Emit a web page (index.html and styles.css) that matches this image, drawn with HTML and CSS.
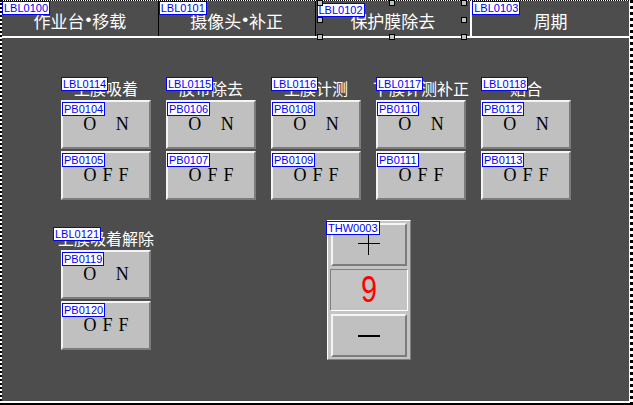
FILE: index.html
```html
<!doctype html>
<html>
<head>
    <meta charset="utf-8">
    <title>保护膜除去</title>
    <link rel="stylesheet" href="styles.css">
</head>
<body>
    <div class="screen">
        <div class="canvas">
            <div class="tabs">
                <div class="tab sep"><span class="tag">LBL0100</span>作业台<span class="dot">•</span>移载</div>
                <div class="tab sep"><span class="tag">LBL0101</span>摄像头<span class="dot">•</span>补正</div>
                <div class="tab current">
                    <span class="tag tag-sel">LBL0102</span>保护膜除去
                    <i class="handle h-tl"></i><i class="handle h-tc"></i><i class="handle h-tr"></i>
                    <i class="handle h-ml"></i><i class="handle h-mr"></i>
                    <i class="handle h-bl"></i><i class="handle h-bc"></i><i class="handle h-br"></i>
                </div>
                <div class="tab"><span class="tag">LBL0103</span>周期</div>
            </div>

            <div class="panel">
                <div class="row">
                    <div class="group">
                        <div class="caption"><span class="tag">LBL0114</span>上膜吸着</div>
                        <div class="btn on"><span class="tag">PB0104</span>O N</div>
                        <div class="btn off"><span class="tag">PB0105</span>OFF</div>
                    </div>
                    <div class="group">
                        <div class="caption"><span class="tag">LBL0115</span>胶带除去</div>
                        <div class="btn on"><span class="tag">PB0106</span>O N</div>
                        <div class="btn off"><span class="tag">PB0107</span>OFF</div>
                    </div>
                    <div class="group">
                        <div class="caption"><span class="tag">LBL0116</span>上膜计测</div>
                        <div class="btn on"><span class="tag">PB0108</span>O N</div>
                        <div class="btn off"><span class="tag">PB0109</span>OFF</div>
                    </div>
                    <div class="group">
                        <div class="caption"><span class="tag">LBL0117</span>下膜计测补正</div>
                        <div class="btn on"><span class="tag">PB0110</span>O N</div>
                        <div class="btn off"><span class="tag">PB0111</span>OFF</div>
                    </div>
                    <div class="group">
                        <div class="caption"><span class="tag">LBL0118</span>贴合</div>
                        <div class="btn on"><span class="tag">PB0112</span>O N</div>
                        <div class="btn off"><span class="tag">PB0113</span>OFF</div>
                    </div>
                </div>

                <div class="row row-low">
                    <div class="group group-low">
                        <div class="caption"><span class="tag tag-wide">LBL0121</span>上膜吸着解除</div>
                        <div class="btn on"><span class="tag">PB0119</span>O N</div>
                        <div class="btn off"><span class="tag">PB0120</span>OFF</div>
                    </div>
                    <div class="thw">
                        <span class="tag tag-thw">THW0003</span>
                        <div class="btn step">
                            <svg width="22" height="22" viewBox="0 0 22 22"><path d="M0 10.5H22M10.5 0V22" stroke="#000" stroke-width="1" fill="none"/></svg>
                        </div>
                        <div class="display"><span class="digit">9</span></div>
                        <div class="btn step">
                            <svg width="22" height="4" viewBox="0 0 22 4"><path d="M0 2H22" stroke="#000" stroke-width="2" fill="none"/></svg>
                        </div>
                    </div>
                </div>
            </div>
        </div>
    </div>
</body>
</html>
```

FILE: styles.css
```css
html, body {
    margin: 0;
    background: #fff;
    font-family: "Noto Sans CJK SC", "Noto Sans", sans-serif;
}

.screen {
    width: 633px;
    height: 405px;
    box-sizing: border-box;
    background: #fff;
    border-top: 1px dotted #000;
    border-left: 2px dotted #000;
    border-right: 3px dotted #000;
    border-bottom: 2px solid #000;
    padding: 0 1px 2px 0;
}

.canvas {
    height: 100%;
    background: #4d4d4d;
}

/* tag boxes over every part */
.tag {
    position: absolute;
    left: 0;
    top: 0;
    z-index: 2;
    background: #fff;
    border: 1px solid #0000ff;
    color: #0000ff;
    font-family: "Liberation Sans", sans-serif;
    font-size: 11px;
    line-height: 12px;
    letter-spacing: 0;
    word-spacing: 0;
    padding: 0 1px;
    white-space: nowrap;
}

/* tabs */
.tabs {
    display: flex;
    border-bottom: 2px solid #fff;
}

.tab {
    position: relative;
    width: 157px;
    height: 35px;
    box-sizing: border-box;
    padding-top: 3px;
    display: flex;
    align-items: center;
    justify-content: center;
    color: #fff;
    font-size: 17px;
}

.dot {
    font-family: "Liberation Sans", sans-serif;
    padding: 0 1px;
}

.tab.sep {
    border-right: 1px solid #000;
}

.tab.current {
    border-right: 2px solid #fff;
}

.tag-sel {
    left: 1px;
    top: 2px;
}

.handle {
    position: absolute;
    z-index: 3;
    width: 4px;
    height: 4px;
    background: #c0c0c0;
    border: 1px solid #000;
}

.h-tl { left: 1px; top: -1px; }
.h-tc { left: 73px; top: -1px; }
.h-tr { left: 145px; top: -1px; }
.h-ml { left: 1px; top: 16px; }
.h-mr { left: 145px; top: 16px; }
.h-bl { left: 1px; top: 33px; }
.h-bc { left: 73px; top: 33px; }
.h-br { left: 145px; top: 33px; }

/* panel */
.panel {
    padding: 38px 0 0 59px;
}

.row {
    display: flex;
    gap: 15px;
    align-items: flex-start;
}

.row-low {
    margin-top: 20px;
    gap: 176px;
}

.group {
    width: 90px;
    display: flex;
    flex-direction: column;
    gap: 2px;
}

.group-low {
    padding-top: 6px;
}

.caption {
    position: relative;
    height: 24px;
    margin-bottom: -2px;
    display: flex;
    align-items: center;
    justify-content: center;
    color: #fff;
    font-size: 16px;
    white-space: nowrap;
}

.caption .tag {
    top: 1px;
}

.tag-wide {
    left: -8px;
    top: 2px;
}

.btn {
    position: relative;
    height: 49px;
    box-sizing: border-box;
    background: #c0c0c0;
    border: 2px solid;
    border-color: #f4f4f4 #7c7c7c #7c7c7c #f4f4f4;
    display: flex;
    align-items: center;
    justify-content: center;
    color: #000;
    font-family: "Liberation Serif", serif;
    font-size: 18px;
}

.btn .tag {
    left: -1px;
    top: 0;
}

.btn.on {
    word-spacing: 15px;
}

.btn.off {
    letter-spacing: 6px;
    padding-left: 6px;
}

/* counter widget */
.thw {
    position: relative;
    width: 84px;
    height: 140px;
    box-sizing: border-box;
    background: #c4c4c4;
    border: 1px solid;
    border-color: #fff #808080 #808080 #fff;
    padding: 2px 3px;
    display: flex;
    flex-direction: column;
    gap: 3px;
}

.tag-thw {
    left: -2px;
    top: 0;
}

.btn.step {
    height: 43px;
}

.display {
    height: 43px;
    box-sizing: border-box;
    margin: 0 -1px;
    border: 1px solid;
    border-color: #808080 #fff #fff #808080;
    display: flex;
    align-items: center;
    justify-content: center;
}

.digit {
    color: #ff0000;
    font-family: "Liberation Sans", sans-serif;
    font-size: 36px;
    line-height: 1;
    transform: scaleX(0.8);
}
```
